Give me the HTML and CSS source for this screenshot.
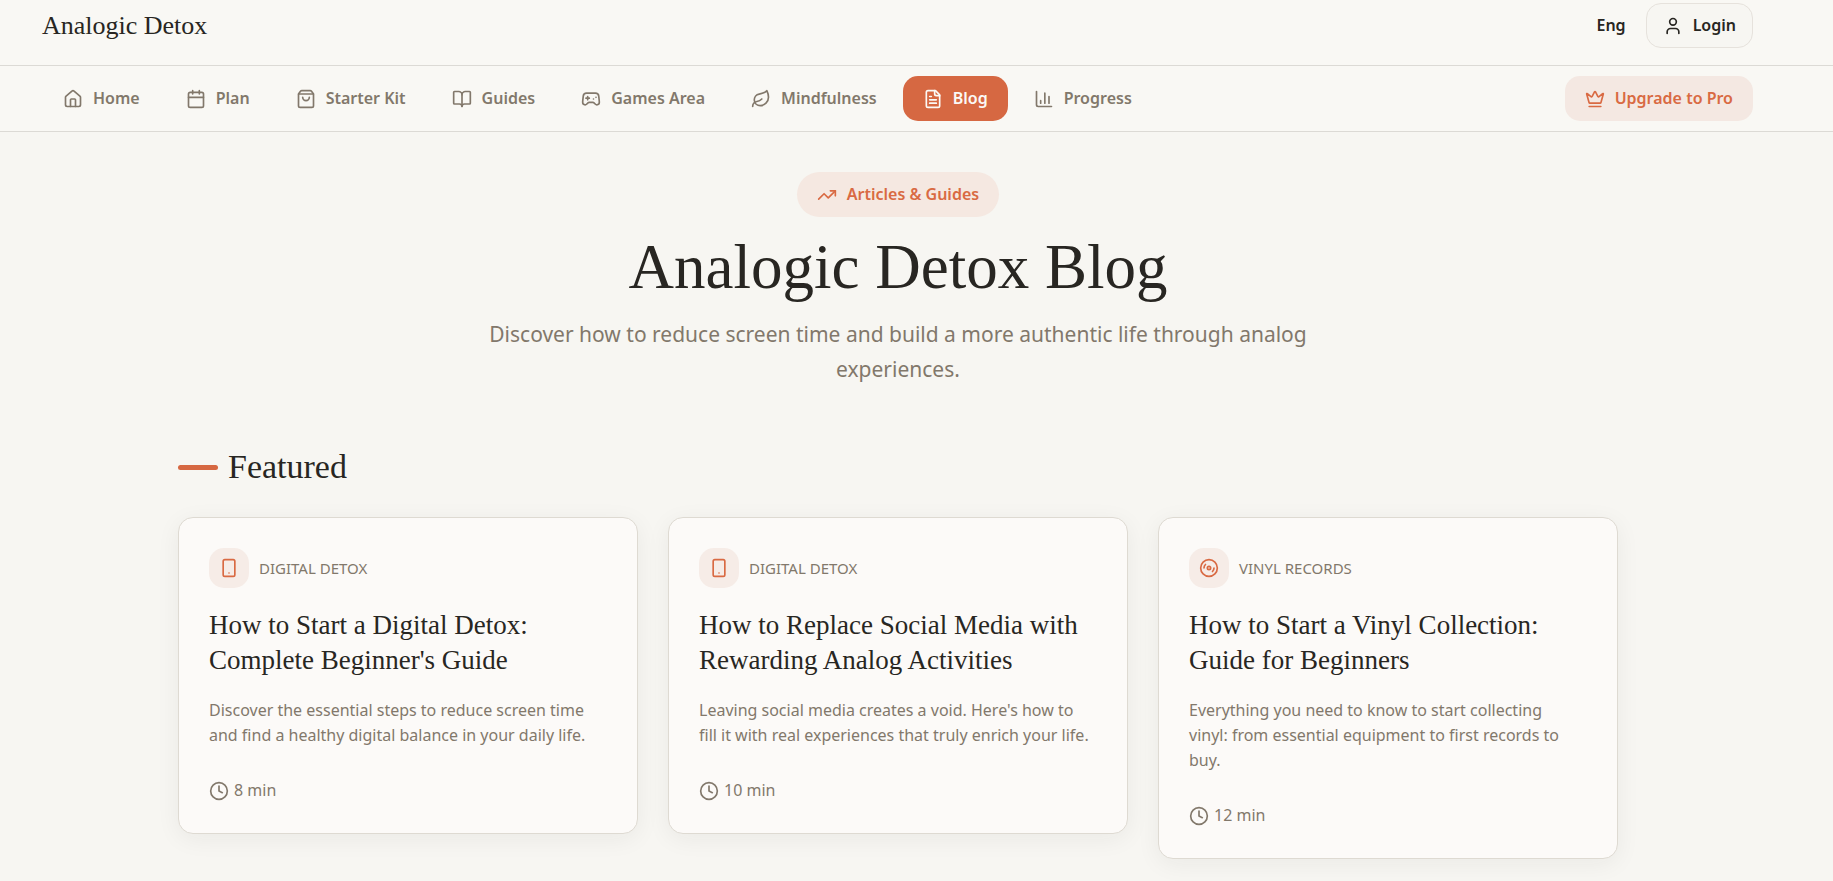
FILE: index.html
```html
<!DOCTYPE html>
<html lang="en">
<head>
    <meta charset="UTF-8">
    <meta name="viewport" content="width=device-width, initial-scale=1.0">
    <title>Analogic Detox Blog</title>
    <link rel="stylesheet" href="styles.css">
</head>
<body>

<header class="header">
    <a href="#" class="logo">Analogic Detox</a>
    <div class="header-actions">
        <button type="button" class="lang-btn">Eng</button>
        <button type="button" class="login-btn">
            <svg class="icon" viewBox="0 0 24 24"><path d="M19 21v-2a4 4 0 0 0-4-4H9a4 4 0 0 0-4 4v2"/><circle cx="12" cy="7" r="4"/></svg>
            Login
        </button>
    </div>
</header>

<nav class="nav">
    <ul class="nav-list">
        <li><a href="#" class="nav-link">
            <svg class="icon" viewBox="0 0 24 24"><path d="M15 21v-8a1 1 0 0 0-1-1h-4a1 1 0 0 0-1 1v8"/><path d="M3 10a2 2 0 0 1 .709-1.528l7-5.999a2 2 0 0 1 2.582 0l7 5.999A2 2 0 0 1 21 10v9a2 2 0 0 1-2 2H5a2 2 0 0 1-2-2z"/></svg>
            Home</a></li>
        <li><a href="#" class="nav-link">
            <svg class="icon" viewBox="0 0 24 24"><path d="M8 2v4M16 2v4"/><rect x="3" y="4" width="18" height="18" rx="2"/><path d="M3 10h18"/></svg>
            Plan</a></li>
        <li><a href="#" class="nav-link">
            <svg class="icon" viewBox="0 0 24 24"><path d="M16 10a4 4 0 0 1-8 0"/><path d="M3.103 6.034h17.794"/><path d="M3.4 5.467a2 2 0 0 0-.4 1.2V20a2 2 0 0 0 2 2h14a2 2 0 0 0 2-2V6.667a2 2 0 0 0-.4-1.2l-2-2.667A2 2 0 0 0 17 2H7a2 2 0 0 0-1.6.8z"/></svg>
            Starter Kit</a></li>
        <li><a href="#" class="nav-link">
            <svg class="icon" viewBox="0 0 24 24"><path d="M12 7v14"/><path d="M3 18a1 1 0 0 1-1-1V4a1 1 0 0 1 1-1h5a4 4 0 0 1 4 4 4 4 0 0 1 4-4h5a1 1 0 0 1 1 1v13a1 1 0 0 1-1 1h-6a3 3 0 0 0-3 3 3 3 0 0 0-3-3z"/></svg>
            Guides</a></li>
        <li><a href="#" class="nav-link">
            <svg class="icon" viewBox="0 0 24 24"><path d="M6 11h4M8 9v4M15 12h.01M18 10h.01"/><path d="M17.32 5H6.68a4 4 0 0 0-3.978 3.59c-.006.052-.01.101-.017.152C2.604 9.416 2 14.456 2 16a3 3 0 0 0 3 3c1 0 1.5-.5 2-1l1.414-1.414A2 2 0 0 1 9.828 16h4.344a2 2 0 0 1 1.414.586L17 18c.5.5 1 1 2 1a3 3 0 0 0 3-3c0-1.545-.604-6.584-.685-7.258-.007-.05-.011-.1-.017-.151A4 4 0 0 0 17.32 5z"/></svg>
            Games Area</a></li>
        <li><a href="#" class="nav-link">
            <svg class="icon" viewBox="0 0 24 24"><path d="M11 20A7 7 0 0 1 9.8 6.1C15.5 5 17 4.48 19 2c1 2 2 4.18 2 8 0 5.5-4.78 10-10 10Z"/><path d="M2 21c0-3 1.85-5.36 5.08-6C9.5 14.52 12 13 13 12"/></svg>
            Mindfulness</a></li>
        <li><a href="#" class="nav-link active">
            <svg class="icon" viewBox="0 0 24 24"><path d="M15 2H6a2 2 0 0 0-2 2v16a2 2 0 0 0 2 2h12a2 2 0 0 0 2-2V7Z"/><path d="M14 2v4a2 2 0 0 0 2 2h4"/><path d="M10 9H8M16 13H8M16 17H8"/></svg>
            Blog</a></li>
        <li><a href="#" class="nav-link">
            <svg class="icon" viewBox="0 0 24 24"><path d="M3 3v16a2 2 0 0 0 2 2h16"/><path d="M18 17V9M13 17V5M8 17v-3"/></svg>
            Progress</a></li>
    </ul>
    <a href="#" class="nav-link upgrade">
        <svg class="icon" viewBox="0 0 24 24"><path d="M11.562 3.266a.5.5 0 0 1 .876 0L15.39 8.87a1 1 0 0 0 1.516.294L21.183 5.5a.5.5 0 0 1 .798.519l-2.834 10.246a1 1 0 0 1-.956.734H5.81a1 1 0 0 1-.957-.734L2.02 6.02a.5.5 0 0 1 .798-.519l4.276 3.664a1 1 0 0 0 1.516-.294z"/><path d="M5 21h14"/></svg>
        Upgrade to Pro</a>
</nav>

<main class="container">
    <section class="hero">
        <span class="badge">
            <svg class="icon" viewBox="0 0 24 24"><path d="M16 7h6v6"/><path d="m22 7-8.500 8.500-5-5L2 17"/></svg>
            Articles &amp; Guides
        </span>
        <h1>Analogic Detox Blog</h1>
        <p>Discover how to reduce screen time and build a more authentic life through analog experiences.</p>
    </section>

    <section>
        <h2 class="section-title">Featured</h2>

        <div class="cards">
            <article class="card">
                <div class="category">
                    <span class="category-icon">
                        <svg class="icon" viewBox="0 0 24 24"><rect x="5" y="2" width="14" height="20" rx="2"/><path d="M12 18h.01"/></svg>
                    </span>
                    Digital Detox
                </div>
                <h3>How to Start a Digital Detox: Complete Beginner's Guide</h3>
                <p>Discover the essential steps to reduce screen time and find a healthy digital balance in your daily life.</p>
                <div class="read-time">
                    <svg class="icon" viewBox="0 0 24 24"><circle cx="12" cy="12" r="10"/><path d="M12 6v6l4 2"/></svg>
                    8 min
                </div>
            </article>

            <article class="card">
                <div class="category">
                    <span class="category-icon">
                        <svg class="icon" viewBox="0 0 24 24"><rect x="5" y="2" width="14" height="20" rx="2"/><path d="M12 18h.01"/></svg>
                    </span>
                    Digital Detox
                </div>
                <h3>How to Replace Social Media with Rewarding Analog Activities</h3>
                <p>Leaving social media creates a void. Here's how to fill it with real experiences that truly enrich your life.</p>
                <div class="read-time">
                    <svg class="icon" viewBox="0 0 24 24"><circle cx="12" cy="12" r="10"/><path d="M12 6v6l4 2"/></svg>
                    10 min
                </div>
            </article>

            <article class="card">
                <div class="category">
                    <span class="category-icon">
                        <svg class="icon" viewBox="0 0 24 24"><circle cx="12" cy="12" r="10"/><path d="M6 12c0-1.700.7-3.200 1.800-4.200"/><circle cx="12" cy="12" r="2"/><path d="M18 12c0 1.700-.7 3.200-1.800 4.200"/></svg>
                    </span>
                    Vinyl Records
                </div>
                <h3>How to Start a Vinyl Collection: Guide for Beginners</h3>
                <p>Everything you need to know to start collecting vinyl: from essential equipment to first records to buy.</p>
                <div class="read-time">
                    <svg class="icon" viewBox="0 0 24 24"><circle cx="12" cy="12" r="10"/><path d="M12 6v6l4 2"/></svg>
                    12 min
                </div>
            </article>
        </div>
    </section>
</main>

</body>
</html>
```
FILE: styles.css
```css
* {
    box-sizing: border-box;
}

body {
    margin: 0;
    font-family: 'Noto Sans', sans-serif;
    font-size: 16px;
    line-height: 25px;
    background: #f7f6f2;
    color: #282622;
}

h1, h2, h3, p, ul {
    margin: 0;
    padding: 0;
    font-weight: 400;
}

a {
    color: inherit;
    text-decoration: none;
}

.icon {
    width: 20px;
    height: 20px;
    flex-shrink: 0;
    fill: none;
    stroke: currentColor;
    stroke-width: 2;
    stroke-linecap: round;
    stroke-linejoin: round;
}

/* Top bar */
.header {
    display: flex;
    justify-content: space-between;
    align-items: flex-start;
    height: 66px;
    padding: 3px 80px 0 42px;
    background: #f9f8f4;
    border-bottom: 1px solid #dcdad5;
}

.logo {
    font-family: 'Liberation Serif', serif;
    font-size: 26px;
    line-height: 45px;
}

.header-actions {
    display: flex;
    align-items: center;
    gap: 20px;
}

.lang-btn,
.login-btn,
.nav-link,
.badge {
    font-family: inherit;
    font-size: 16px;
    font-weight: 600;
    line-height: 25px;
}

.lang-btn {
    padding: 0;
    border: none;
    background: none;
    color: inherit;
    cursor: pointer;
}

.login-btn {
    display: flex;
    align-items: center;
    gap: 10px;
    padding: 9px 16px;
    border: 1px solid #e6e2dc;
    border-radius: 15px;
    background: #f7f6f2;
    color: inherit;
    cursor: pointer;
}

/* Navigation */
.nav {
    display: flex;
    justify-content: space-between;
    align-items: center;
    padding: 10px 80px 10px 43px;
    background: #f9f8f4;
    border-bottom: 1px solid #dcdad5;
}

.nav-list {
    display: flex;
    gap: 6px;
    list-style: none;
}

.nav-link {
    display: flex;
    align-items: center;
    gap: 10px;
    padding: 10px 20px;
    border-radius: 15px;
    color: #82786b;
}

.nav-link.active {
    background: #d66842;
    color: #fbf9f6;
}

.nav-link.upgrade {
    background: #f4e8e2;
    color: #d96a43;
}

/* Page content */
.container {
    max-width: 1557px;
    margin: 0 auto;
    padding: 40px 77px 40px 40px;
}

.hero {
    max-width: 840px;
    margin: 0 auto;
    text-align: center;
}

.badge {
    display: inline-flex;
    align-items: center;
    gap: 10px;
    padding: 10px 20px;
    border-radius: 30px;
    background: #f5e8e1;
    color: #d96a43;
}

.hero h1 {
    margin: 20px 0;
    font-family: 'Liberation Serif', serif;
    font-size: 63px;
    line-height: 60px;
}

.hero p {
    font-size: 21px;
    line-height: 35px;
    color: #82786b;
}

.section-title {
    display: flex;
    align-items: center;
    gap: 10px;
    margin: 60px 0 30px;
    font-family: 'Liberation Serif', serif;
    font-size: 34px;
    line-height: 40px;
}

.section-title::before {
    content: '';
    width: 40px;
    height: 5px;
    border-radius: 3px;
    background: #d66842;
}

.cards {
    display: grid;
    grid-template-columns: repeat(3, 1fr);
    align-items: start;
    gap: 30px;
}

.card {
    padding: 30px;
    background: #fcfaf8;
    border: 1px solid #dedad2;
    border-radius: 15px;
    box-shadow: 0 5px 25px rgba(40, 38, 34, 0.06);
}

.category {
    display: flex;
    align-items: center;
    gap: 10px;
    font-size: 15px;
    text-transform: uppercase;
    color: #82786b;
}

.category-icon {
    display: flex;
    align-items: center;
    justify-content: center;
    width: 40px;
    height: 40px;
    border-radius: 15px;
    background: #f6ece7;
    color: #d96a43;
}

.card h3 {
    margin: 20px 0;
    font-family: 'Liberation Serif', serif;
    font-size: 27px;
    line-height: 35px;
}

.card p {
    padding-right: 5px;
    color: #82786b;
}

.read-time {
    display: flex;
    align-items: center;
    gap: 5px;
    margin-top: 30px;
    color: #82786b;
}
```
